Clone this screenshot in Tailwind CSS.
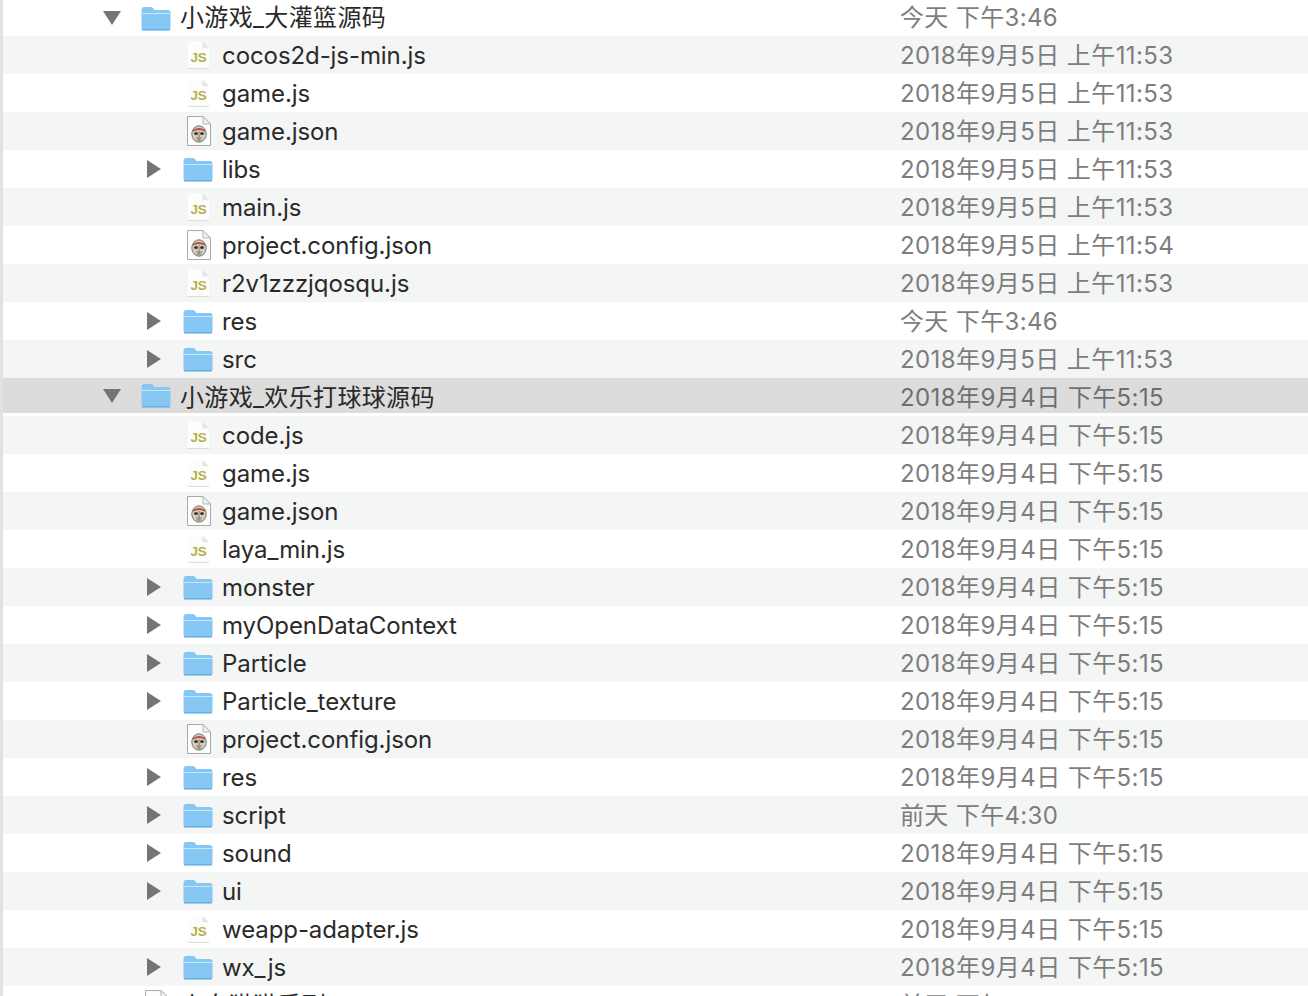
<!DOCTYPE html>
<html lang="zh">
<head>
    <meta charset="utf-8"/>
    <title>Finder list</title>
    <script src="https://cdn.jsdelivr.net/npm/@tailwindcss/browser@4"></script>
</head>
<body class="bg-white overflow-hidden">
    <svg class="hidden">
        <defs>
            <linearGradient id="fg" x1="0" y1="0" x2="0" y2="1">
                <stop offset="0" stop-color="#a5dcfb"/>
                <stop offset="1" stop-color="#7cc4f5"/>
            </linearGradient>
            <symbol id="folder" viewBox="0 0 30 25">
                <path d="M0.5 4.5 Q0.5 1 3 1 L10 1 Q11.5 1 12.5 2.5 L13.5 4 L27 4 Q29.5 4 29.5 6.5 L29.5 22 Q29.5 24.5 27 24.5 L3 24.5 Q0.5 24.5 0.5 22 Z" fill="#86c8f3"/>
                <path d="M0.5 8 L29.5 6.5 L29.5 22 Q29.5 23.6 27 23.6 L3 23.6 Q0.5 23.6 0.5 22 Z" fill="url(#fg)"/>
                <path d="M0.5 7.5 L29.5 7.5" stroke="#c4e9fd" stroke-width="1"/>
                <path d="M1 23.8 L29 23.8" stroke="#5aa5d8" stroke-width="1"/>
            </symbol>
            <symbol id="js" viewBox="0 0 24 30">
                <path d="M1 1 L16 1 L23 8 L23 28.5 L1 28.5 Z" fill="#fdfdfd"/>
                <path d="M16 1 L16 8 L23 8 Z" fill="#e6e6e6"/>
                <path d="M1 29 L23 29" stroke="#d8d8d8" stroke-width="1"/>
                <text x="12" y="22" text-anchor="middle" font-family="'Liberation Sans', sans-serif" font-weight="700" font-size="14" fill="#b5b04a">JS</text>
            </symbol>
            <symbol id="mask" viewBox="0 0 26 32">
                <path d="M1.5 1.5 L17 1.5 L24.5 9 L24.5 30.5 L1.5 30.5 Z" fill="#fdfdfd" stroke="#a9a9a9" stroke-width="1"/>
                <path d="M17 1.5 L17 9 L24.5 9 Z" fill="#f2f2f2" stroke="#b5b5b5" stroke-width="1"/>
                <ellipse cx="13" cy="19" rx="7.2" ry="8.2" fill="#d6cec1" stroke="#7b766d" stroke-width="1"/>
                <path d="M7 15 Q13 11 19 15 L19 16.5 Q13 13.5 7 16.5 Z" fill="#b5523f"/>
                <ellipse cx="10" cy="18.5" rx="1.9" ry="1.5" fill="#39342f"/>
                <ellipse cx="16" cy="18.5" rx="1.9" ry="1.5" fill="#39342f"/>
                <path d="M13 16 L13 26 M10 23 L16 23 M10.5 25 L15.5 25" stroke="#7f776c" stroke-width="0.9"/>
            </symbol>
            <symbol id="down" viewBox="0 0 18 14"><path d="M0 0 L18 0 L9 14 Z" fill="#757575"/></symbol>
            <symbol id="right" viewBox="0 0 14 18"><path d="M0 0 L14 9 L0 18 Z" fill="#757575"/></symbol>
        </defs>
    </svg>

    <div class="h-[996px] overflow-hidden border-l-[3px] border-[#e2e2e2] font-['Inter','Noto_Sans_CJK_SC',sans-serif] text-[24px] text-[#2a2a2a] tracking-[-0.08px] [&>div:not(:first-child)_span]:pt-[2px]">
        <!-- first project folder -->
        <div class="h-[36px] flex items-center">
            <div class="w-[897px] flex items-center pl-[100px]"><svg class="w-[18px] h-[14px] mr-[20px]"><use href="#down"/></svg><svg class="w-[30px] h-[25px] mr-[9px]"><use href="#folder"/></svg><span class="tracking-[0.35px]">小游戏_大灌篮源码</span></div>
            <span class="text-[#7d7d7d] tracking-[0.35px]">今天 下午3:46</span>
        </div>
        <div class="h-[38px] flex items-center bg-[#f4f5f5]">
            <div class="w-[897px] flex items-center pl-[184px]"><svg class="w-[23px] h-[30px] mr-[12px]"><use href="#js"/></svg><span>cocos2d-js-min.js</span></div>
            <span class="text-[#7d7d7d] tracking-[0.42px]">2018年9月5日 上午11:53</span>
        </div>
        <div class="h-[38px] flex items-center">
            <div class="w-[897px] flex items-center pl-[184px]"><svg class="w-[23px] h-[30px] mr-[12px]"><use href="#js"/></svg><span>game.js</span></div>
            <span class="text-[#7d7d7d] tracking-[0.42px]">2018年9月5日 上午11:53</span>
        </div>
        <div class="h-[38px] flex items-center bg-[#f4f5f5]">
            <div class="w-[897px] flex items-center pl-[183px]"><svg class="w-[26px] h-[32px] mr-[10px]"><use href="#mask"/></svg><span>game.json</span></div>
            <span class="text-[#7d7d7d] tracking-[0.42px]">2018年9月5日 上午11:53</span>
        </div>
        <div class="h-[38px] flex items-center">
            <div class="w-[897px] flex items-center pl-[144px]"><svg class="w-[14px] h-[18px] mr-[22px]"><use href="#right"/></svg><svg class="w-[30px] h-[25px] mr-[9px]"><use href="#folder"/></svg><span>libs</span></div>
            <span class="text-[#7d7d7d] tracking-[0.42px]">2018年9月5日 上午11:53</span>
        </div>
        <div class="h-[38px] flex items-center bg-[#f4f5f5]">
            <div class="w-[897px] flex items-center pl-[184px]"><svg class="w-[23px] h-[30px] mr-[12px]"><use href="#js"/></svg><span>main.js</span></div>
            <span class="text-[#7d7d7d] tracking-[0.42px]">2018年9月5日 上午11:53</span>
        </div>
        <div class="h-[38px] flex items-center">
            <div class="w-[897px] flex items-center pl-[183px]"><svg class="w-[26px] h-[32px] mr-[10px]"><use href="#mask"/></svg><span>project.config.json</span></div>
            <span class="text-[#7d7d7d] tracking-[0.42px]">2018年9月5日 上午11:54</span>
        </div>
        <div class="h-[38px] flex items-center bg-[#f4f5f5]">
            <div class="w-[897px] flex items-center pl-[184px]"><svg class="w-[23px] h-[30px] mr-[12px]"><use href="#js"/></svg><span>r2v1zzzjqosqu.js</span></div>
            <span class="text-[#7d7d7d] tracking-[0.42px]">2018年9月5日 上午11:53</span>
        </div>
        <div class="h-[38px] flex items-center">
            <div class="w-[897px] flex items-center pl-[144px]"><svg class="w-[14px] h-[18px] mr-[22px]"><use href="#right"/></svg><svg class="w-[30px] h-[25px] mr-[9px]"><use href="#folder"/></svg><span>res</span></div>
            <span class="text-[#7d7d7d] tracking-[0.35px]">今天 下午3:46</span>
        </div>
        <div class="h-[38px] flex items-center bg-[#f4f5f5]">
            <div class="w-[897px] flex items-center pl-[144px]"><svg class="w-[14px] h-[18px] mr-[22px]"><use href="#right"/></svg><svg class="w-[30px] h-[25px] mr-[9px]"><use href="#folder"/></svg><span>src</span></div>
            <span class="text-[#7d7d7d] tracking-[0.42px]">2018年9月5日 上午11:53</span>
        </div>

        <!-- second project folder, selected without focus -->
        <div class="h-[38px] flex items-center bg-white border-b-[3px] border-white">
            <div class="h-[35px] w-full flex items-center bg-[#dcdcdc]">
                <div class="w-[897px] flex items-center pl-[100px]"><svg class="w-[18px] h-[14px] mr-[20px]"><use href="#down"/></svg><svg class="w-[30px] h-[25px] mr-[9px]"><use href="#folder"/></svg><span class="tracking-[0.35px] !pt-[5px]">小游戏_欢乐打球球源码</span></div>
                <span class="text-[#6f6f6f] tracking-[0.42px] !pt-[5px]">2018年9月4日 下午5:15</span>
            </div>
        </div>
        <div class="h-[38px] flex items-center bg-[#f4f5f5]">
            <div class="w-[897px] flex items-center pl-[184px]"><svg class="w-[23px] h-[30px] mr-[12px]"><use href="#js"/></svg><span>code.js</span></div>
            <span class="text-[#7d7d7d] tracking-[0.42px]">2018年9月4日 下午5:15</span>
        </div>
        <div class="h-[38px] flex items-center">
            <div class="w-[897px] flex items-center pl-[184px]"><svg class="w-[23px] h-[30px] mr-[12px]"><use href="#js"/></svg><span>game.js</span></div>
            <span class="text-[#7d7d7d] tracking-[0.42px]">2018年9月4日 下午5:15</span>
        </div>
        <div class="h-[38px] flex items-center bg-[#f4f5f5]">
            <div class="w-[897px] flex items-center pl-[183px]"><svg class="w-[26px] h-[32px] mr-[10px]"><use href="#mask"/></svg><span>game.json</span></div>
            <span class="text-[#7d7d7d] tracking-[0.42px]">2018年9月4日 下午5:15</span>
        </div>
        <div class="h-[38px] flex items-center">
            <div class="w-[897px] flex items-center pl-[184px]"><svg class="w-[23px] h-[30px] mr-[12px]"><use href="#js"/></svg><span>laya_min.js</span></div>
            <span class="text-[#7d7d7d] tracking-[0.42px]">2018年9月4日 下午5:15</span>
        </div>
        <div class="h-[38px] flex items-center bg-[#f4f5f5]">
            <div class="w-[897px] flex items-center pl-[144px]"><svg class="w-[14px] h-[18px] mr-[22px]"><use href="#right"/></svg><svg class="w-[30px] h-[25px] mr-[9px]"><use href="#folder"/></svg><span>monster</span></div>
            <span class="text-[#7d7d7d] tracking-[0.42px]">2018年9月4日 下午5:15</span>
        </div>
        <div class="h-[38px] flex items-center">
            <div class="w-[897px] flex items-center pl-[144px]"><svg class="w-[14px] h-[18px] mr-[22px]"><use href="#right"/></svg><svg class="w-[30px] h-[25px] mr-[9px]"><use href="#folder"/></svg><span>myOpenDataContext</span></div>
            <span class="text-[#7d7d7d] tracking-[0.42px]">2018年9月4日 下午5:15</span>
        </div>
        <div class="h-[38px] flex items-center bg-[#f4f5f5]">
            <div class="w-[897px] flex items-center pl-[144px]"><svg class="w-[14px] h-[18px] mr-[22px]"><use href="#right"/></svg><svg class="w-[30px] h-[25px] mr-[9px]"><use href="#folder"/></svg><span>Particle</span></div>
            <span class="text-[#7d7d7d] tracking-[0.42px]">2018年9月4日 下午5:15</span>
        </div>
        <div class="h-[38px] flex items-center">
            <div class="w-[897px] flex items-center pl-[144px]"><svg class="w-[14px] h-[18px] mr-[22px]"><use href="#right"/></svg><svg class="w-[30px] h-[25px] mr-[9px]"><use href="#folder"/></svg><span>Particle_texture</span></div>
            <span class="text-[#7d7d7d] tracking-[0.42px]">2018年9月4日 下午5:15</span>
        </div>
        <div class="h-[38px] flex items-center bg-[#f4f5f5]">
            <div class="w-[897px] flex items-center pl-[183px]"><svg class="w-[26px] h-[32px] mr-[10px]"><use href="#mask"/></svg><span>project.config.json</span></div>
            <span class="text-[#7d7d7d] tracking-[0.42px]">2018年9月4日 下午5:15</span>
        </div>
        <div class="h-[38px] flex items-center">
            <div class="w-[897px] flex items-center pl-[144px]"><svg class="w-[14px] h-[18px] mr-[22px]"><use href="#right"/></svg><svg class="w-[30px] h-[25px] mr-[9px]"><use href="#folder"/></svg><span>res</span></div>
            <span class="text-[#7d7d7d] tracking-[0.42px]">2018年9月4日 下午5:15</span>
        </div>
        <div class="h-[38px] flex items-center bg-[#f4f5f5]">
            <div class="w-[897px] flex items-center pl-[144px]"><svg class="w-[14px] h-[18px] mr-[22px]"><use href="#right"/></svg><svg class="w-[30px] h-[25px] mr-[9px]"><use href="#folder"/></svg><span>script</span></div>
            <span class="text-[#7d7d7d] tracking-[0.35px]">前天 下午4:30</span>
        </div>
        <div class="h-[38px] flex items-center">
            <div class="w-[897px] flex items-center pl-[144px]"><svg class="w-[14px] h-[18px] mr-[22px]"><use href="#right"/></svg><svg class="w-[30px] h-[25px] mr-[9px]"><use href="#folder"/></svg><span>sound</span></div>
            <span class="text-[#7d7d7d] tracking-[0.42px]">2018年9月4日 下午5:15</span>
        </div>
        <div class="h-[38px] flex items-center bg-[#f4f5f5]">
            <div class="w-[897px] flex items-center pl-[144px]"><svg class="w-[14px] h-[18px] mr-[22px]"><use href="#right"/></svg><svg class="w-[30px] h-[25px] mr-[9px]"><use href="#folder"/></svg><span>ui</span></div>
            <span class="text-[#7d7d7d] tracking-[0.42px]">2018年9月4日 下午5:15</span>
        </div>
        <div class="h-[38px] flex items-center">
            <div class="w-[897px] flex items-center pl-[184px]"><svg class="w-[23px] h-[30px] mr-[12px]"><use href="#js"/></svg><span>weapp-adapter.js</span></div>
            <span class="text-[#7d7d7d] tracking-[0.42px]">2018年9月4日 下午5:15</span>
        </div>
        <div class="h-[38px] flex items-center bg-[#f4f5f5]">
            <div class="w-[897px] flex items-center pl-[144px]"><svg class="w-[14px] h-[18px] mr-[22px]"><use href="#right"/></svg><svg class="w-[30px] h-[25px] mr-[9px]"><use href="#folder"/></svg><span>wx_js</span></div>
            <span class="text-[#7d7d7d] tracking-[0.42px]">2018年9月4日 下午5:15</span>
        </div>
        <div class="h-[38px] flex items-center">
            <div class="w-[897px] flex items-center pl-[141px]"><svg class="w-[26px] h-[32px] mr-[10px]"><use href="#mask"/></svg><span class="tracking-[0.35px]">小白猫猫系列</span></div>
            <span class="text-[#7d7d7d] tracking-[0.35px]">前天 下午</span>
        </div>
    </div>
</body>
</html>
